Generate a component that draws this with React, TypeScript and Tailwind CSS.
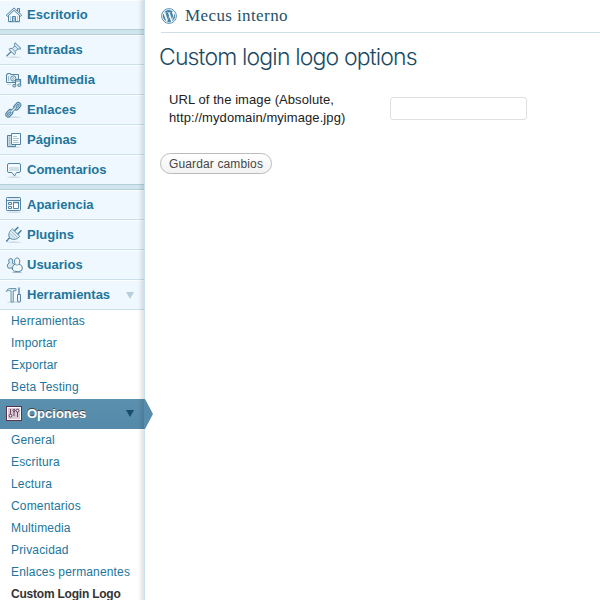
import type { ReactNode } from "react";

const S = "#5285a5";

function Icon({ children, flat }: { children: ReactNode; flat?: boolean }) {
  return (
    <svg width="18" height="18" viewBox="0 0 18 18" fill="none" stroke={S} strokeWidth="1" className="shrink-0">
      {!flat && <ellipse cx="9" cy="16.2" rx="7" ry="0.6" fill="#c3d2dc" stroke="none" />}
      {children}
    </svg>
  );
}

const icons: Record<string, ReactNode> = {
  Escritorio: (
    <Icon>
      <path d="M3.5 9.5v6h11v-6" fill="#f6fafc" />
      <path d="M12.5 5V2.5h2v4" fill="#dbe8f0" />
      <path d="M1.300 9.200 9 1.900l7.700 7.300-1.200 1.200L9 4.400 2.500 10.400z" fill="#dbe8f0" />
      <path d="M7.500 15.500v-5h3v5" fill="#a9c6d6" />
      <path d="M5.500 10v5M12.500 10v5" stroke="#b4cbd8" />
    </Icon>
  ),
  Entradas: (
    <Icon>
      <path d="M1.500 15.300 6 10.800" strokeWidth="1.300" />
      <path d="M10 1.800 16 7.400c-1.200 1-2.200.8-3.200.5l-2.600 2.600c.5 1.500.1 2.600-.8 3.200L3.900 8.500c.8-1 2-1.300 3.300-.9l2.600-2.700c-.5-.9-.5-2 .2-3.100Z" fill="#dce9f1" />
      <path d="m7.300 7.600 2.900 2.900M9.800 4.900l3 3" stroke="#7ba3bb" />
    </Icon>
  ),
  Multimedia: (
    <Icon flat>
      <path d="M1.500 3.500h1v-1h3v1h8v8h-12z" fill="#e7f1f6" />
      <circle cx="8.300" cy="7.500" r="2.600" fill="#fff" />
      <circle cx="8.300" cy="7.500" r=".9" stroke="#86acc2" />
      <path d="M3.500 5v5" stroke="#9dbbcd" />
      <path d="M10.500 14.500V8.500h5v5.500" fill="#eff8ff" strokeWidth="1.200" />
      <path d="M10.500 10h5" />
      <ellipse cx="9.300" cy="14.700" rx="1.600" ry="1.300" fill="#c5dae6" />
      <ellipse cx="14.300" cy="14.200" rx="1.600" ry="1.300" fill="#c5dae6" />
      <path d="M2 13.500h4" stroke="#c5d5df" />
    </Icon>
  ),
  Enlaces: (
    <Icon>
      <rect x="-4.100" y="-2.500" width="8.200" height="5" rx="2.500" transform="translate(4.300 12.300) rotate(-48)" strokeWidth="1.200" fill="#d3e3ec" />
      <rect x="-4.100" y="-2.500" width="8.200" height="5" rx="2.500" transform="translate(12.300 5.200) rotate(-48)" strokeWidth="1.200" fill="#d3e3ec" />
      <rect x="-1.900" y="-.8" width="3.800" height="1.600" rx=".8" transform="translate(4 12.600) rotate(-48)" fill="#fff" />
      <rect x="-1.900" y="-.8" width="3.800" height="1.600" rx=".8" transform="translate(12.600 4.900) rotate(-48)" fill="#fff" />
      <path d="m6 11 4.800-4.700" strokeWidth="3" />
      <path d="m6 11 4.800-4.700" stroke="#e7f1f6" strokeWidth="1.200" />
    </Icon>
  ),
  "Páginas": (
    <Icon>
      <path d="M6 4.500H2.500v11h8V14" fill="#c7dbe6" />
      <path d="M6.500 2.500h9v11h-9z" fill="#f8fbfd" />
      <path d="M8 5.500h4M8 7.500h6M8 9.500h5M8 11.500h6" stroke="#a9c4d3" />
      <path d="M4.500 6v8" stroke="#a2bfcf" />
    </Icon>
  ),
  Comentarios: (
    <Icon>
      <path d="M4 2.500h10q1.500 0 1.500 1.500v6q0 1.500-1.500 1.500h-2.500L9.500 15 7 11.500H4q-1.500 0-1.500-1.500V4Q2.500 2.500 4 2.500Z" fill="#f7fbfd" />
      <path d="M4 6h10v4H4z" fill="#d0e1ea" stroke="none" />
    </Icon>
  ),
  Apariencia: (
    <Icon>
      <rect x="1.500" y="1.500" width="14" height="13" rx=".7" fill="#f5fafc" />
      <path d="M2 4.500h13" />
      <path d="M3 3h11" stroke="#c8dae4" />
      <path d="M3.500 6.500h3v2h-3zM3.500 10.500h3v2h-3zM8.500 6.500h5v6h-5z" fill="#fff" />
      <path d="M8 6.500h6" strokeWidth="1.500" />
    </Icon>
  ),
  Plugins: (
    <Icon>
      <path d="m9.300 5 4-3.800M12.800 8.300l3.600-4" strokeWidth="1.700" />
      <path d="m7.400 3 7.400 7.300c-2.300 2.700-5.700 4-8.800 2.400L4.300 11.100C2.900 8.300 4.800 4.600 7.400 3Z" fill="#e1edf4" />
      <path d="m6.500 5.500 6 6M5.300 7.700l4.800 4.800" stroke="#9bbbcd" />
      <path d="M5 12c-2.500.2-1.200 2.500-4 3.200" strokeWidth="1.400" />
    </Icon>
  ),
  Usuarios: (
    <Icon flat>
      <ellipse cx="12" cy="16.200" rx="5" ry=".7" fill="#9db7c7" stroke="none" />
      <path d="M4.300 7C3.300 5 3.600 2.500 5.700 2.500S8 5 7.300 7c2 .5 3 2 2.500 5.100H3.300C1.800 10.200 2.200 7.700 4.300 7Z" fill="#d9e7ef" />
      <path d="M10.200 8.200C8.800 5.500 9.500 2 12.100 2s3.400 3.500 1.900 6.200c2.800.5 3.700 3 3 5.800-1.800 2.100-7.500 2.100-9.300 0-.6-2.900.2-5.300 2.500-5.800Z" fill="#f3f8fb" />
      <path d="M10.200 8.200c1 1.200 2.800 1.200 3.800 0" stroke="#7ba3bb" />
    </Icon>
  ),
  Herramientas: (
    <Icon>
      <path d="M1.300 5.500C2 3.400 3.500 2.300 6 2.500h5v2.200H8.300V16H6V5C4 4.400 2.500 4.500 1.300 5.500Z" fill="#d4e4ed" stroke="#6b97b1" />
      <path d="M14 1.500v7" strokeWidth="1.400" />
      <path d="M12.500 8.500h3V15q0 1-1.500 1t-1.500-1z" fill="#edf5f9" />
    </Icon>
  ),
};

function SettingsIcon() {
  return (
    <svg width="18" height="18" viewBox="0 0 18 18" className="shrink-0">
      <rect x="1.500" y="1.500" width="15" height="14" fill="#f4eef3" stroke="#5b3150" />
      <rect x="2.500" y="2.500" width="13" height="12" fill="#dccbd6" stroke="#fff" />
      <path d="M5.500 4v6M9 4v7M12.500 7v5" stroke="#6f4564" />
      <circle cx="5.500" cy="10.700" r="1.400" fill="#fff" stroke="#5b3150" />
      <circle cx="12.500" cy="5.600" r="1.400" fill="#fff" stroke="#5b3150" />
      <circle cx="9" cy="5.500" r="1" fill="#fff" stroke="#5b3150" />
    </svg>
  );
}

function MenuItem({ name, arrow }: { name: string; arrow?: boolean }) {
  return (
    <div className="flex h-[30px] items-center border-t border-b border-t-[#fbfeff] border-b-[#cae0e9] bg-[#eff8ff] pl-[5px]">
      {icons[name]}
      <span className="ml-1 flex-1 text-[13px] leading-[18px] font-bold text-[#21759b]">{name}</span>
      {arrow && (
        <svg width="8" height="7" viewBox="0 0 8 7" className="mr-[10px]">
          <path d="M0 0h8L4 7z" fill="#b7cfda" />
        </svg>
      )}
    </div>
  );
}

function Separator() {
  return <div className="-mt-px h-[6px] border-t border-b border-[#b4cfda] bg-[#d1e5ee]" />;
}

function Submenu({ items, current }: { items: string[]; current?: string }) {
  return (
    <ul className="text-[12px] leading-[22px] text-[#21759b]">
      {items.map((item) => (
        <li
          key={item}
          className={item === current ? "pl-[11px] font-bold tracking-[-0.22px] text-[#333333]" : "pl-[11px] tracking-[0.16px]"}
        >
          {item}
        </li>
      ))}
    </ul>
  );
}

function WordPressLogo() {
  return (
    <svg width="16" height="16" viewBox="0 0 16 16" fill="none">
      <circle cx="8" cy="8" r="7.400" fill="#f3f8fb" stroke="#5b93b3" />
      <path
        fill="#4583a5"
        d="M2.500 5.500a6 6 0 0 0 2.900 8L2.500 5.500ZM3.100 4.600A6 6 0 0 1 12 3.500c-1 .2-1.300 1.200-.8 2 .7 1.200 1.100 2 .5 3.800l-.7 2.200-2.200-6.600.8-.1V4.300l-3.300.1v.5l.8.1 1 2.700-1.400 4-2.200-6.700.8-.1v-.4H3.100ZM6.200 13.800 8.100 8.500l2 5.300a6 6 0 0 1-3.900 0ZM11 13.200 13.100 7.300c.3-.9.3-1.500.2-2.100a6 6 0 0 1-2.300 8Z"
      />
    </svg>
  );
}

export default function App() {
  return (
    <div className="flex h-[600px] w-[600px] overflow-hidden bg-white font-['Liberation_Sans',Arial,sans-serif]">
      <nav className="relative h-full w-[145px] shrink-0 border-r border-[#c9e3ee]">
        <MenuItem name="Escritorio" />
        <Separator />
        <MenuItem name="Entradas" />
        <MenuItem name="Multimedia" />
        <MenuItem name="Enlaces" />
        <MenuItem name="Páginas" />
        <MenuItem name="Comentarios" />
        <Separator />
        <MenuItem name="Apariencia" />
        <MenuItem name="Plugins" />
        <MenuItem name="Usuarios" />
        <MenuItem name="Herramientas" arrow />
        <Submenu items={["Herramientas", "Importar", "Exportar", "Beta Testing"]} />
        <div className="relative z-10 mt-px flex h-[30px] items-center bg-linear-to-b from-[#5b90ae] to-[#5489a9] pb-px pl-[5px]">
          <SettingsIcon />
          <span className="ml-1 flex-1 text-[13px] leading-[18px] font-bold text-white [text-shadow:0_-1px_0_#444]">Opciones</span>
          <svg width="8" height="7" viewBox="0 0 8 7" className="mr-[10px]">
            <path d="M0 0h8L4 7z" fill="#194d68" />
          </svg>
          <svg width="9" height="30" viewBox="0 0 9 30" className="absolute top-0 left-[144px]">
            <path d="M0 0h1l8 15-8 15H0z" fill="#578cab" />
          </svg>
        </div>
        <Submenu
          items={["General", "Escritura", "Lectura", "Comentarios", "Multimedia", "Privacidad", "Enlaces permanentes", "Custom Login Logo"]}
          current="Custom Login Logo"
        />
        <div className="absolute inset-y-0 right-0 z-20 w-[6px] bg-linear-to-r from-transparent to-black/12" />
      </nav>

      <main className="min-w-0 flex-1">
        <header className="ml-4 flex h-[33px] items-center gap-2 border-b border-[#cfdfe9] pb-px">
          <WordPressLogo />
          <span className="text-[17px] leading-[30px] tracking-[0.4px] text-[#1f526b] font-['Liberation_Serif',Georgia,serif]">Mecus interno</span>
        </header>
        <h1 className="ml-[14px] mt-2 h-8 text-[23px] leading-8 font-light tracking-[-0.85px] whitespace-nowrap text-[#1b4b63] font-['Inter',sans-serif]">
          Custom login logo options
        </h1>
        <div className="mt-[18px] flex h-9 items-center">
          <label className="ml-6 w-[221px] text-[13px] leading-[18px] tracking-[0.08px] text-[#222222]">
            URL of the image (Absolute,
            <br />
            http://mydomain/myimage.jpg)
          </label>
          <input className="-mt-[2px] h-[23px] w-[137px] rounded-[3px] border border-[#dfdfdf] bg-white px-1 text-[13px] outline-none" />
        </div>
        <button className="mt-[26px] ml-[15px] block h-[21px] w-[112px] rounded-full border border-[#bbbbbb] bg-linear-to-b from-white to-[#f2f2f2] px-0 text-[12px] leading-[18px] tracking-[0.14px] whitespace-nowrap text-[#464646]">
          Guardar cambios
        </button>
      </main>
    </div>
  );
}
